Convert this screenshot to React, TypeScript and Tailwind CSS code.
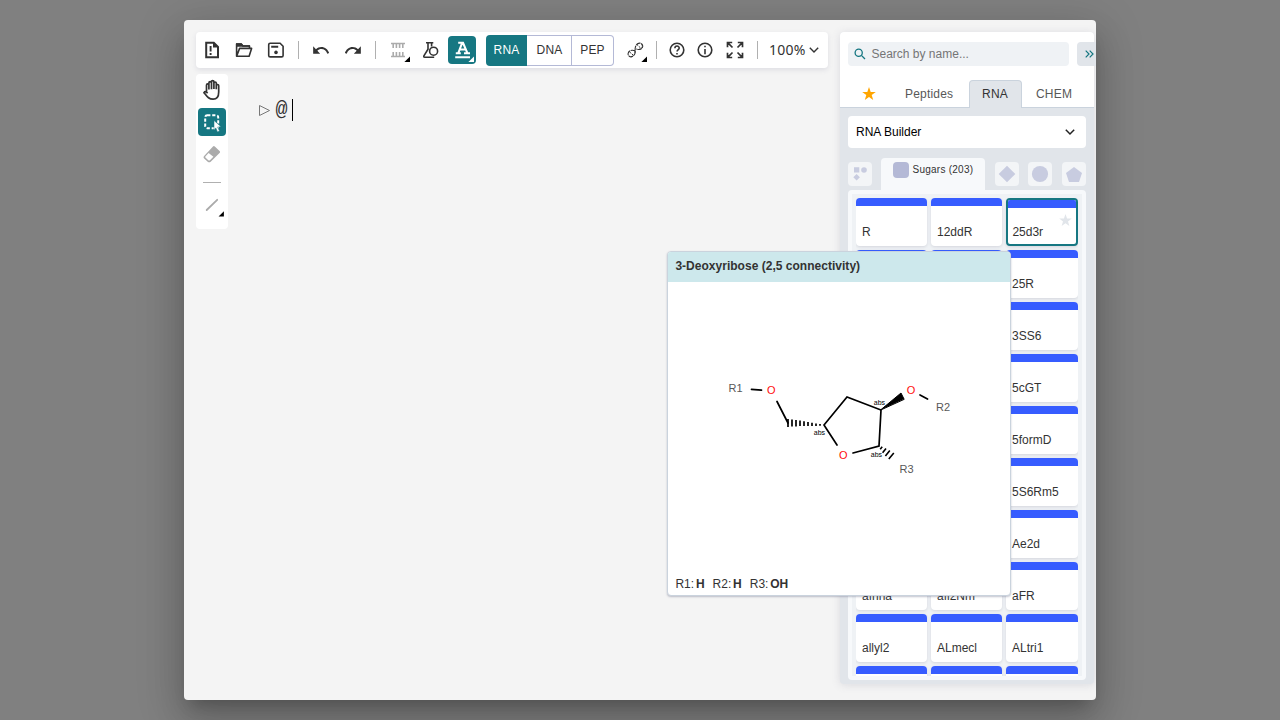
import React from 'react';

const slot = 'flex h-7 w-7 shrink-0 items-center justify-center rounded-sm';

function Icon({ children, className = '' }: { children: React.ReactNode; className?: string }) {
  return (
    <svg viewBox="0 0 28 28" className={`h-7 w-7 shrink-0 ${className}`} fill="none" stroke="currentColor" strokeWidth="1.6">
      {children}
    </svg>
  );
}

const Corner = () => <path d="M26 20.5V26h-5.6z" fill="currentColor" stroke="none" />;

const Separator = ({ className = '' }: { className?: string }) => (
  <div className={`h-[18px] w-px shrink-0 bg-[#b0b0b0] ${className}`} />
);

function Toolbar() {
  return (
    <header className="flex h-9 w-[632px] shrink-0 items-center rounded bg-white pl-0.5 text-[#333333] shadow-[0_2px_5px_rgba(103,104,132,0.15)]">
      <Icon>
        <path d="M8.2 6.7h7.6l4.2 4.2v10.3H8.2z" strokeWidth="2" />
        <path d="M15 6v5.6h6z" fill="currentColor" stroke="none" />
        <path d="M12.6 10v5.6M12.6 17v2" strokeWidth="1.9" />
      </Icon>
      <Icon className="ml-1">
        <path d="M6.6 20.3V8h4.7l1.6 2h6.6v2.4M6.6 20.3l3-7.9h12l-2.5 7.9z" strokeLinejoin="round" />
        <path d="M6 7.2h5.6l1.6 2H20v1.5H6z" fill="currentColor" stroke="none" />
      </Icon>
      <Icon className="ml-1">
        <path d="M8.2 7.3h9.9l3 3v9.1q0 1.5-1.5 1.5H8.2q-1.5 0-1.5-1.5V8.8q0-1.5 1.5-1.5z" />
        <path d="M9.2 10.8h7" strokeWidth="2" />
        <circle cx="14" cy="16.4" r="1.8" fill="currentColor" stroke="none" />
      </Icon>
      <Separator className="ml-2" />
      <Icon className="ml-[7px]">
        <path transform="translate(5.6 4.3) scale(.78 .84)" d="M12.5 8c-2.65 0-5.05.99-6.9 2.6L2 7v9h9l-3.62-3.62c1.39-1.16 3.16-1.88 5.12-1.88 3.54 0 6.55 2.31 7.6 5.5l2.37-.78C21.08 11.03 17.15 8 12.5 8z" fill="currentColor" stroke="none" />
      </Icon>
      <Icon className="ml-1">
        <path transform="translate(24.4 4.3) scale(-.78 .84)" d="M12.5 8c-2.65 0-5.05.99-6.9 2.6L2 7v9h9l-3.62-3.62c1.39-1.16 3.16-1.88 5.12-1.88 3.54 0 6.55 2.31 7.6 5.5l2.37-.78C21.08 11.03 17.15 8 12.5 8z" fill="currentColor" stroke="none" />
      </Icon>
      <Separator className="ml-[9px]" />
      <Icon className="ml-2">
        <path d="M7 7.5h14M9.2 8v3.9M12.4 8v3.9M15.6 8v3.9M18.8 8v3.9M7 20.5h14M9.2 20v-3.9M12.4 20v-3.9M15.6 20v-3.9M18.8 20v-3.9" stroke="#ababab" />
        <g className="text-black"><Corner /></g>
      </Icon>
      <Icon className="ml-1">
        <path d="M10 6.7h7.3M12 7v6.2l-4.1 6.6q-.6 1.4.8 1.4h9.5M15.6 7v3.5" />
        <circle cx="17.6" cy="15.2" r="4" />
      </Icon>
      <div className={`${slot} ml-1 bg-[#167782] text-white`}>
        <Icon>
          <path d="M7.2 21.2h14.8" strokeWidth="2" />
          <path d="M10.2 6.8h4.8l4.4 10.4M14.1 7L10.3 17M11.4 13.5h5.8M7.8 17.3h5M16 17.3h6" strokeWidth="2.1" />
          <Corner />
        </Icon>
      </div>
      <div className="ml-2.5 flex h-[31px] w-32 shrink-0 text-[12px] leading-[28px] tracking-[0.2px]">
        <div className="w-[41px] rounded-l bg-[#167782] text-center leading-[30px] text-white">RNA</div>
        <div className="w-[45px] border-y border-r border-[#b4b9d6] pl-px text-center">DNA</div>
        <div className="flex-1 rounded-r border-y border-r border-[#b4b9d6] text-center">PEP</div>
      </div>
      <Icon className="ml-[7px]">
        <path d="M14.5 15.2c-3.5-2-7-.7-7.4 2.3-.3 3 3 4.3 5.5 2.2 3-2.6.6-5.2 1.9-9.1 1-3 4.6-4.5 6.4-2.5 2.5 3-.6 7-5.9 4.8" strokeWidth="1.1" strokeDasharray="5 .6" />
        <path d="M8.4 15.8l4.6 4M15.8 8.4l4.2 4M10 20.8c3.7-1.1 4.2-3.2 4.2-5.6M17.5 13.5c3.3-.5 4.5-3 3.4-5.4" strokeWidth="1" strokeDasharray="2 1" />
        <g className="text-black"><Corner /></g>
      </Icon>
      <Separator className="ml-[7px]" />
      <Icon className="ml-1.5">
        <circle cx="14" cy="14" r="6.8" />
        <path d="M11.9 12.2c0-2.8 4.3-2.8 4.3-.2 0 1.7-2.1 1.5-2.1 3.5M14 16.9v1.5" />
      </Icon>
      <Icon>
        <circle cx="14" cy="14" r="6.8" />
        <path d="M14 13v5.2M14 9.8v1.5" />
      </Icon>
      <Icon className="ml-0.5">
        <path d="M6.5 11.3V6.5h4.7M16.8 6.5h4.7v4.8M21.5 16.7v4.8h-4.7M11.2 21.5H6.5v-4.8M6.7 6.7l4.8 4.8M21.3 6.7l-4.8 4.8M21.3 21.3l-4.8-4.8M6.7 21.3l4.8-4.8" strokeWidth="1.7" />
      </Icon>
      <Separator className="ml-2" />
      <span className="ml-[11px] font-['Noto_Sans',sans-serif] text-[14px] leading-5 tracking-[0.25px]">100%</span>
      <svg viewBox="0 0 10 8" className="ml-[3px] h-2 w-2.5" fill="none" stroke="#333" strokeWidth="1.4"><path d="M.8 1.8L5 6l4.2-4.2" /></svg>
    </header>
  );
}

function Tools() {
  return (
    <aside className="flex h-[155px] w-8 flex-col items-center rounded bg-white text-[#333333]">
      <Icon className="mt-0.5">
        <path d="M8.5 17V9.3q0-1.4 1.2-1.4t1.2 1.4v4.2M10.9 9V7q0-1.3 1.3-1.3T13.5 7v6.2M13.5 7V5.8q0-1.2 1.2-1.2t1.2 1.2V13M15.9 7.2q0-1.2 1.2-1.2t1.2 1.2v6M18.3 9.7q0-1.2 1.2-1.2t1.2 1.2V16c0 4.3-1.8 7.2-5.6 7.2-4.4 0-5.8-2.4-9.1-6.6q1.4-2.1 3.6.7" strokeWidth="1.7" />
      </Icon>
      <div className={`${slot} mt-1 bg-[#167782] text-white`}>
        <Icon>
          <rect x="7.2" y="7.2" width="13" height="13" rx="2" strokeWidth="2" strokeDasharray="3.2 1.8" />
          <path d="M16 12.5l7 6.2-3.4.4 1.9 4-2 .8-1.7-4-1.8 2z" fill="white" stroke="#167782" strokeWidth=".5" />
        </Icon>
      </div>
      <Icon className="mt-1 text-[#ababab]">
        <path transform="translate(0 .7)" d="M16.8 5.8l5 4.7q.7.8 0 1.5l-9.1 9.1q-1.5 1-3 0l-3.8-3.6q-.8-1 0-2L15 5.8q.9-.8 1.8 0zM10.6 12.2l-3.2 3.5q-.5.5 0 1l2.9 2.8q.8.6 1.6 0l3.5-3.4z" fill="currentColor" fillRule="evenodd" stroke="none" />
      </Icon>
      <div className="mt-3.5 h-px w-[18px] shrink-0 bg-[#b0b0b0]" />
      <Icon className="mt-2">
        <path d="M8.7 19L19.2 8.8" stroke="#ababab" strokeWidth="1.8" strokeLinecap="round" />
        <path d="M25.9 20.2v5.3h-5.3z" fill="#000" stroke="none" />
      </Icon>
    </aside>
  );
}

const names = [
  'R', '12ddR', '25d3r', '25moe3', '25moe3r', '25R', '3A6', '3FAM', '3SS6', '4eUra', '5A6', '5cGT', '5cm', '5eto',
  '5formD', '5R6Rm5', '5R6Sm5', '5S6Rm5', '5S6Sm5', 'ad2d', 'Ae2d', 'afhna', 'afl2Nm', 'aFR', 'allyl2', 'ALmecl',
  'ALtri1', '', '', '',
];

const starPath = 'M7 0l1.7 4.9h5.1L9.7 8l1.5 5L7 10l-4.2 3 1.5-5L.2 4.9h5.1z';

function Card({ name }: { name: string }) {
  const selected = name === '25d3r';
  return (
    <div className={`relative flex h-12 flex-col overflow-hidden rounded bg-white shadow-[0_1px_3px_rgba(103,104,132,0.2)] ${selected ? 'border-2 border-[#167782]' : ''}`}>
      <div className="h-2 shrink-0 bg-[#365cff]" />
      <span className={`text-[12px] leading-4 ${selected ? 'pl-[4.4px] pt-4' : 'pl-[6px] pt-[18px] nth-[1]:pl-0'}`}>{name}</span>
      {selected && (
        <svg viewBox="0 0 14 13" className="absolute right-1 top-3.5 h-3 w-[13px]" fill="#e1e5ea"><path d={starPath} /></svg>
      )}
    </div>
  );
}

const chip = 'flex h-6 w-6 shrink-0 items-center justify-center rounded bg-[#f3f5f7]';

function Library() {
  return (
    <aside className="flex h-[652px] w-[254px] shrink-0 flex-col rounded bg-[#e1e5ea] text-[#333333] shadow-[0_1px_9px_rgba(103,104,132,0.18)]">
      <div className="flex h-[75px] shrink-0 flex-col rounded-t bg-white">
        <div className="flex pl-2 pt-2.5">
          <div className="flex h-6 w-[221px] shrink-0 items-center rounded bg-[#eff2f5] pl-1.5">
            <svg viewBox="0 0 12 12" className="h-3 w-3" fill="none" stroke="#167782" strokeWidth="1.3"><circle cx="4.7" cy="4.7" r="3.6" /><path d="M7.4 7.4l3.6 3.6" /></svg>
            <span className="ml-[5.5px] text-[12px] leading-4 text-[#757575]">Search by name...</span>
          </div>
          <div className="ml-2 flex h-6 w-[19px] shrink-0 items-center justify-end rounded-l bg-[#e1e5ea] pr-[2.5px]">
            <svg viewBox="0 0 9 8" className="h-2 w-[9px]" fill="none" stroke="#167782" strokeWidth="1.2"><path d="M.7.7L4 4 .7 7.3M4.7.7L8 4 4.7 7.3" /></svg>
          </div>
        </div>
        <div className="mt-[14px] flex h-7 border-b border-[#cad3dd] text-[12px] leading-[28px] tracking-[0.2px] text-[#585858]">
          <div className="flex w-[58px] items-center justify-center">
            <svg viewBox="0 0 14 13" className="h-[13px] w-3.5" fill="#ffa500"><path d={starPath} /></svg>
          </div>
          <div className="w-[71px] pl-[7px]">Peptides</div>
          <div className="h-7 w-[53px] rounded-t border border-b-0 border-[#cad3dd] bg-[#e1e5ea] pr-px text-center leading-[26px] text-[#333333]">RNA</div>
          <div className="pl-[14px]">CHEM</div>
        </div>
      </div>
      <div className="mx-2 mt-[9px] flex h-8 shrink-0 items-center justify-between rounded bg-white pl-2 pr-[11px] text-[12px] text-black">
        RNA Builder
        <svg viewBox="0 0 10 8" className="h-2 w-2.5" fill="none" stroke="#222" strokeWidth="1.5"><path d="M.8 1.8L5 6l4.2-4.2" /></svg>
      </div>
      <div className="mx-2 mt-2.5 flex h-8 shrink-0 items-start">
        <div className={`${chip} mt-1`}>
          <svg viewBox="0 0 24 24" fill="#c8cce0"><path d="M6 5.3h5.3v5.3H6zM8.6 12.1l3.3 3.2-3.3 3.3-3.3-3.3z" /><circle cx="16" cy="8" r="2.8" /></svg>
        </div>
        <div className="ml-[9px] flex h-8 w-[104px] shrink-0 rounded-t bg-[#f7f9fb] pl-3 pt-1">
          <div className="h-4 w-4 rounded-sm bg-[#b4b9d6]" />
          <span className="ml-[3.5px] text-[10px] leading-4 tracking-[0.25px]">Sugars (203)</span>
        </div>
        <div className={`${chip} ml-[10px] mt-1`}><svg viewBox="0 0 24 24" fill="#c8cce0"><path d="M12 3.7l8.3 8.3-8.3 8.3L3.7 12z" /></svg></div>
        <div className={`${chip} ml-[9px] mt-1`}><svg viewBox="0 0 24 24" fill="#c8cce0"><circle cx="12" cy="12" r="8.1" /></svg></div>
        <div className={`${chip} ml-[10px] mt-1`}><svg viewBox="0 0 24 24" fill="#c8cce0"><path d="M12 5l8 6-3 9H7l-3-9z" /></svg></div>
      </div>
      <div className="mx-2 h-[490px] rounded bg-[#f7f9fb] p-1">
        <div className="h-[482px] overflow-hidden bg-[#eff2f5] px-1 pt-1">
          <div className="grid h-[478px] grid-cols-[71px_71px_72px] content-start gap-1 overflow-hidden">
            {names.map((name, i) => <Card key={i} name={name} />)}
          </div>
        </div>
      </div>
    </aside>
  );
}

function Molecule() {
  return (
    <svg viewBox="710 370 260 120" className="ml-[42px] mt-[88px] h-[120px] w-[260px] shrink-0" fill="none" stroke="#000" strokeWidth="1.7" strokeLinecap="round">
      <path d="M751.5 389.4l10 .7M777 401.5l11 21.5M824 425l13 20M824 425l23-28 34 13-2 36-26 7M920 395l7.5 4" />
      <path d="M880.5 410l20.5-17 3 6z" fill="#000" stroke="#000" strokeWidth="1" />
      <path strokeLinecap="butt" d="M788 419v8M792 419.4v7.2M796 420v6.4M800 420.6v5.5M804 421.3v4.8M808 422v4M812 422.8v3.2M816 423.5v2.5M820 424v1.8" />
      <path strokeLinecap="butt" strokeWidth="1.6" d="M880.2 449.3l2-2.5M882.6 452.7l3.4-4.2M885.4 455.9l4.4-5.4M888.8 458.9l5-6" />
      <g stroke="none" fontFamily="Liberation Sans, sans-serif" fontSize="11" fill="#585858">
        <text x="728.5" y="392">R1</text>
        <text x="936" y="411">R2</text>
        <text x="899.5" y="473">R3</text>
        <g fill="#ff0d0d" textAnchor="middle">
          <text x="771.3" y="394">O</text><text x="911" y="394">O</text><text x="843.3" y="459">O</text>
        </g>
        <g fill="#000" fontSize="7"><text x="873.8" y="405">abs</text><text x="813.8" y="435">abs</text><text x="870.8" y="457">abs</text></g>
      </g>
    </svg>
  );
}

export default function App() {
  return (
    <div className="flex h-screen w-screen items-center justify-center overflow-hidden bg-[#808080] font-['Liberation_Sans',sans-serif]">
      <div className="relative h-[680px] w-[912px] overflow-hidden rounded-sm bg-[#f4f4f4] shadow-[0_11px_15px_-7px_rgba(0,0,0,0.2),0_24px_38px_3px_rgba(0,0,0,0.14),0_9px_46px_8px_rgba(0,0,0,0.12)]">
        <div className="flex pl-3 pt-3">
          <main className="w-[644px] shrink-0">
            <Toolbar />
            <div className="mt-1.5 flex">
              <Tools />
              <div className="flex h-[52px] items-center pl-[30px] pt-5">
                <svg viewBox="0 0 13 13" className="h-[13px] w-[13px]" fill="none" stroke="#777" strokeWidth="1"><path d="M1.5 1.5v10L11.5 6.5z" strokeLinejoin="round" /></svg>
                <span className="ml-[4.5px] w-[16.5px] font-['Liberation_Mono',monospace] text-[20px] leading-6 text-[#333]">@</span>
                <div className="h-[22px] w-px shrink-0 bg-black" />
              </div>
            </div>
          </main>
          <Library />
        </div>
        <section className="absolute left-[483px] top-[231px] flex h-[345px] w-[344px] flex-col overflow-hidden rounded border border-[#cad3dd] bg-white text-[12px] text-[#333333] shadow-[0_1px_2px_rgba(103,104,132,0.4)]">
          <h2 className="h-[30px] shrink-0 bg-[#cde8ec] pl-[7.4px] font-bold leading-7 tracking-[0.02px]">3-Deoxyribose (2,5 connectivity)</h2>
          <Molecule />
          <div className="mt-auto flex gap-2 pb-[3px] pl-[7.4px] leading-4">
            <span>R1: <b className="-ml-[1.5px]">H</b></span>
            <span>R2: <b className="-ml-[1.5px]">H</b></span>
            <span>R3: <b className="-ml-[1.5px]">OH</b></span>
          </div>
        </section>
      </div>
    </div>
  );
}
